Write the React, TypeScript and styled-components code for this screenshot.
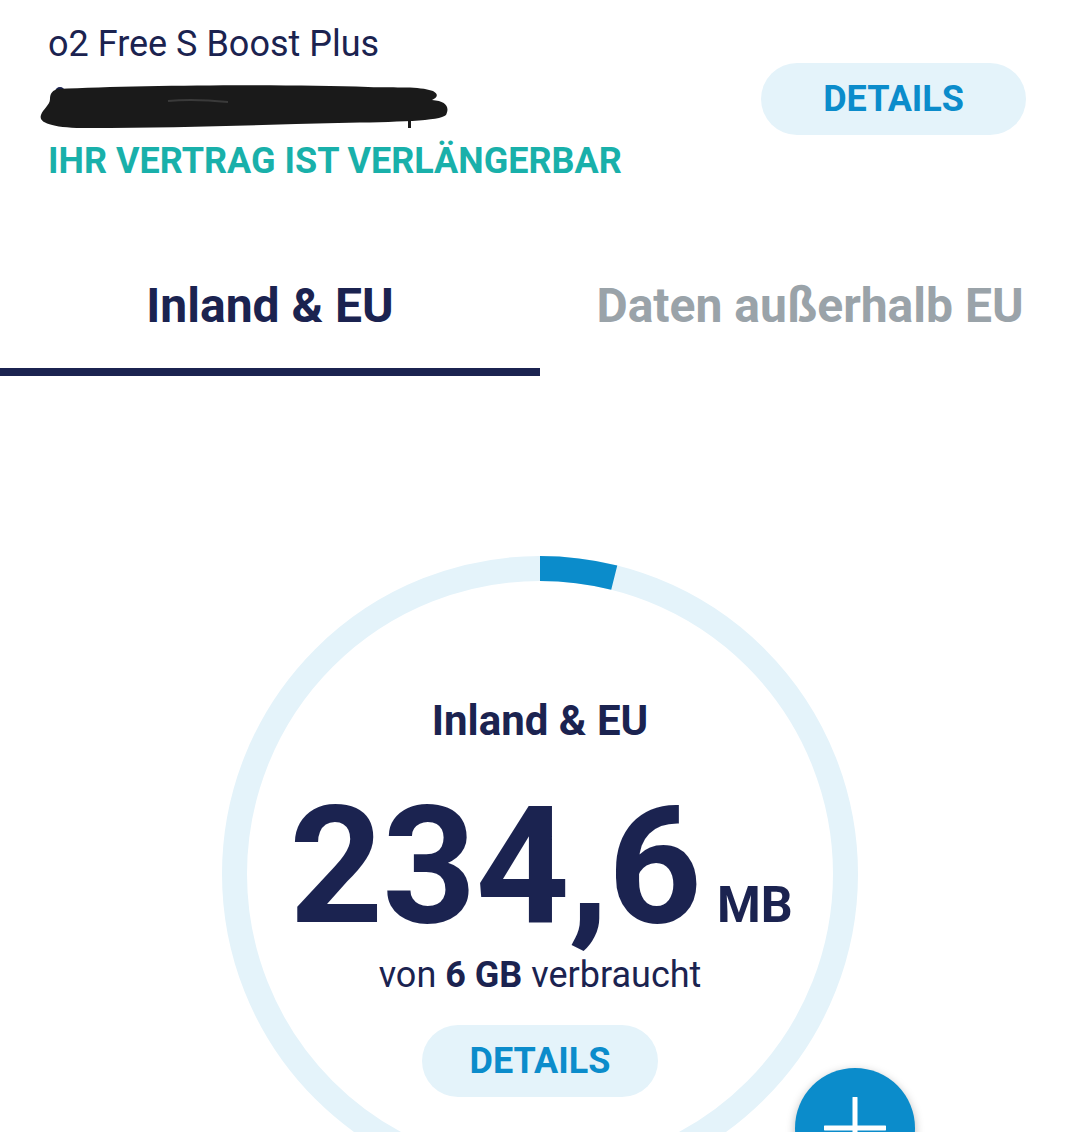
import React from "react";
import styled, { createGlobalStyle } from "styled-components";

const NAVY = "#1b2350";
const TEAL = "#19b0aa";
const BLUE = "#0b8ccb";
const PALE = "#e4f3fa";
const GRAY = "#9aa3a9";

const Global = createGlobalStyle`
  html, body { margin: 0; padding: 0; background: #ffffff; }
  body { font-family: Roboto, "Noto Sans", "Liberation Sans", sans-serif; color: ${NAVY}; }
  * { box-sizing: border-box; }
`;

const Page = styled.div`
  position: relative;
  width: 1080px;
  height: 1132px;
  overflow: hidden;
  background: #fff;
`;

const Header = styled.header`
  display: flex;
  justify-content: space-between;
  align-items: flex-start;
  padding: 24px 54px 0 48px;
`;

const Info = styled.div`
  display: flex;
  flex-direction: column;
`;

const Title = styled.div`
  font-size: 36px;
  line-height: 40px;
  font-weight: 400;
  color: ${NAVY};
`;

const Redaction = styled.svg`
  display: block;
  width: 412px;
  height: 44px;
  margin: 21px 0 10px -10px;
`;

const Renewal = styled.div`
  font-size: 36px;
  line-height: 44px;
  font-weight: 700;
  color: ${TEAL};
`;

const PillButton = styled.button<{ $padX: number }>`
  height: 72px;
  padding: 0 ${(p) => p.$padX}px;
  border: none;
  border-radius: 36px;
  background: ${PALE};
  color: ${BLUE};
  font-family: Roboto, "Liberation Sans", sans-serif;
  font-size: 36px;
  font-weight: 700;
  line-height: 72px;
  cursor: pointer;
`;

const HeaderButton = styled(PillButton)`
  margin-top: 39px;
`;

const Tabs = styled.nav`
  display: grid;
  grid-template-columns: 1fr 1fr;
  margin-top: 95px;
`;

const Tab = styled.div<{ $active?: boolean }>`
  text-align: center;
  font-size: 48px;
  line-height: 56px;
  font-weight: 700;
  padding-bottom: 34px;
  color: ${(p) => (p.$active ? NAVY : GRAY)};
  border-bottom: 8px solid ${(p) => (p.$active ? NAVY : "transparent")};
`;

const Usage = styled.section`
  display: flex;
  justify-content: center;
  margin-top: 180px;
`;

const Ring = styled.div`
  position: relative;
  width: 636px;
  height: 636px;
`;

const RingSvg = styled.svg`
  position: absolute;
  inset: 0;
  width: 636px;
  height: 636px;
`;

const RingContent = styled.div`
  position: relative;
  display: flex;
  flex-direction: column;
  align-items: center;
  padding-top: 140px;
`;

const RingLabel = styled.div`
  font-size: 42px;
  line-height: 50px;
  font-weight: 700;
  color: ${NAVY};
`;

const AmountRow = styled.div`
  display: flex;
  align-items: baseline;
  height: 140px;
  margin-top: 50px;
  padding-left: 2px;
`;

const Amount = styled.span`
  font-size: 164px;
  line-height: 140px;
  font-weight: 700;
  color: ${NAVY};
  letter-spacing: -1px;
`;

const Unit = styled.span`
  font-size: 50px;
  line-height: 50px;
  font-weight: 700;
  color: ${NAVY};
  margin-left: 16px;
`;

const Consumed = styled.div`
  margin-top: 18px;
  font-size: 36px;
  line-height: 42px;
  font-weight: 400;
  color: ${NAVY};
  b { font-weight: 700; }
`;

const RingButton = styled(PillButton)`
  margin-top: 29px;
`;

const Fab = styled.button`
  position: absolute;
  left: 795px;
  top: 1068px;
  width: 120px;
  height: 120px;
  border-radius: 50%;
  border: none;
  background: ${BLUE};
  box-shadow: 0 3px 10px rgba(0, 0, 0, 0.28);
  display: flex;
  align-items: flex-start;
  justify-content: center;
  padding-top: 29px;
  cursor: pointer;
`;

const R = 305.5;
const C = 2 * Math.PI * R;
const used = 234.6 / 6000;

export default function App() {
  return (
    <Page>
      <Global />
      <Header>
        <Info>
          <Title>o2 Free S Boost Plus</Title>
          <Redaction viewBox="0 0 412 44" aria-hidden>
            <circle cx="22" cy="7" r="5" fill="#1b2350" />
            <path
              d="M 20 4 C 100 0, 250 -1, 330 2 C 360 3, 380 1, 395 6 C 402 10, 398 13, 394 15 C 408 16, 412 22, 408 30 C 402 36, 360 37, 300 38 C 220 40, 140 43, 50 43 C 15 43, 0 38, 3 30 C 5 24, 12 20, 12 14 C 12 8, 15 5, 20 4 Z"
              fill="#1a1a1a"
            />
            <path d="M 130 16 C 150 14, 170 15, 190 17" stroke="#3a3a3a" strokeWidth="2" fill="none" />
            <rect x="370" y="36" width="3" height="7" fill="#1a1a1a" />
          </Redaction>
          <Renewal>IHR VERTRAG IST VERLÄNGERBAR</Renewal>
        </Info>
        <HeaderButton $padX={62}>DETAILS</HeaderButton>
      </Header>

      <Tabs>
        <Tab $active>Inland &amp; EU</Tab>
        <Tab>Daten außerhalb EU</Tab>
      </Tabs>

      <Usage>
        <Ring>
          <RingSvg viewBox="0 0 636 636" aria-hidden>
            <circle cx="318" cy="318" r={R} fill="none" stroke={PALE} strokeWidth="25" />
            <circle
              cx="318"
              cy="318"
              r={R}
              fill="none"
              stroke={BLUE}
              strokeWidth="25"
              strokeDasharray={`${C * used} ${C}`}
              transform="rotate(-90 318 318)"
            />
          </RingSvg>
          <RingContent>
            <RingLabel>Inland &amp; EU</RingLabel>
            <AmountRow>
              <Amount>234,6</Amount>
              <Unit>MB</Unit>
            </AmountRow>
            <Consumed>
              von <b>6 GB</b> verbraucht
            </Consumed>
            <RingButton $padX={48}>DETAILS</RingButton>
          </RingContent>
        </Ring>
      </Usage>

      <Fab aria-label="Hinzufügen">
        <svg width="62" height="62" viewBox="0 0 62 62">
          <path d="M31 1 V61 M1 31 H61" stroke="#fff" strokeWidth="5" strokeLinecap="round" />
        </svg>
      </Fab>
    </Page>
  );
}
